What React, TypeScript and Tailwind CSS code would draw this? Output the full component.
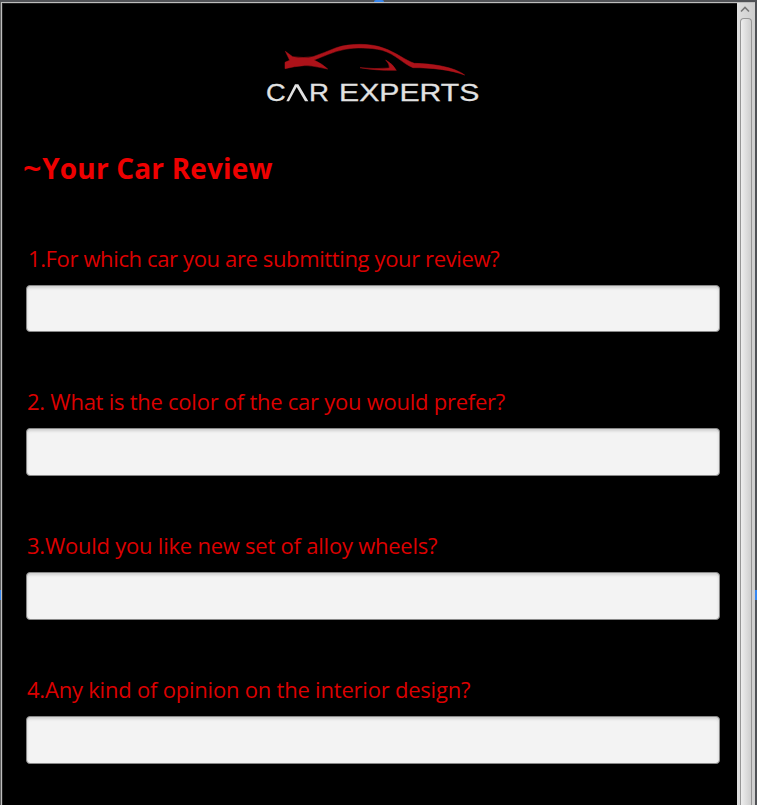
const questions = [
  { text: '1.For which car you are submitting your review?', style: 'ml-[28px] tracking-[-0.37px]', top: 'h-[143px]', box: 'h-[47px]' },
  { text: '2. What is the color of the car you would prefer?', style: 'ml-[27px] tracking-[-0.25px]', top: 'h-[144px]', box: 'h-[48px]' },
  { text: '3.Would you like new set of alloy wheels?', style: 'ml-[27px] tracking-[-0.23px]', top: 'h-[144px]', box: 'h-[48px]' },
  { text: '4.Any kind of opinion on the interior design?', style: 'ml-[27px] tracking-[-0.21px]', top: 'h-[144px]', box: 'h-[48px]' },
];

function Logo() {
  return (
    <svg className="ml-[252px] block h-[75px] w-[240px] shrink-0" viewBox="0 0 720 225" role="img" aria-label="Car Experts">
      <g fill="#ac1219" stroke="#ac1219" strokeWidth="1.5">
        <path d="M91 49 L113 65 Q147 70 174 65 Q208 53 244 38 C288 24 348 25 385 39 C425 53 451 76 478 85 C533 86 598 96 629 120 C586 104 530 98 474 98 C446 88 421 57 382 46 C346 37 303 37 270 43 C235 49 203 66 177 75 Q203 87 218 102 C187 96 165 91 146 92 Q118 94 90 101 L90 82 L104 76 Z" />
        <path d="M315 98 Q360 103 403 99 Q404 87 392 75 Q414 87 424 106 Q363 107 315 98Z" />
      </g>
      <g fill="#e2e2e2" stroke="#e2e2e2" strokeWidth="0.8" fontFamily="Liberation Sans, Arial, sans-serif" fontSize="71">
        <text x="33" y="198" textLength="59" lengthAdjust="spacingAndGlyphs">C</text>
        <text x="162" y="198" textLength="60" lengthAdjust="spacingAndGlyphs">R</text>
        <text x="252" y="198" textLength="421" lengthAdjust="spacingAndGlyphs">EXPERTS</text>
      </g>
      <path d="M94 199 L120 148 L130 148 L160 199 L150 199 L125 156 L102 199 Z" fill="#e2e2e2" />
    </svg>
  );
}

function Scrollbar() {
  return (
    <div className="flex w-[18px] shrink-0 flex-col items-center bg-linear-to-r from-[#dedede] to-[#cecece]">
      <svg className="h-[15px] w-[14px] shrink-0" viewBox="0 0 14 15" fill="none" stroke="#777" strokeWidth="1.6">
        <path d="M2 8.5 L6 4.5 L10 8.5" />
      </svg>
      <div className="w-[12px] flex-1 rounded-t-[4px] border border-b-0 border-[#969696] bg-linear-to-r from-[#eeeeee] to-[#cecece]" />
    </div>
  );
}

export default function App() {
  return (
    <div className="flex h-[805px] w-[757px] flex-col overflow-hidden bg-[#505256] font-['Open_Sans','Noto_Sans',sans-serif]">
      <div className="flex h-[2px] shrink-0 justify-center">
        <div className="w-[10px] rounded-t-full bg-[#3686ef]" />
      </div>
      <div className="flex min-h-0 flex-1">
        <div className="flex w-px shrink-0 flex-col bg-[#606060]">
          <div className="mt-[588px] h-[10px] bg-[#3686ef]" />
        </div>
        <div className="flex min-w-0 flex-1 border-t border-l border-[#bdbdbd]">
          <main className="flex min-w-0 flex-1 flex-col overflow-hidden border-t border-l border-[#202020] bg-black pt-[31px]">
            <Logo />
            <h1 className="mt-[38px] ml-[20px] h-[40px] shrink-0 text-[28px] leading-[40px] font-bold tracking-[0.17px] whitespace-nowrap text-[#ee0000]"><span className="mr-[3px] inline-block origin-left scale-x-115">~</span>Your Car Review</h1>
            <form className="mt-[54px] flex flex-col">
              {questions.map((q) => (
                <div key={q.text} className={`-ml-[3px] flex shrink-0 flex-col ${q.top}`}>
                  <label className={`h-[43px] shrink-0 text-[22px] leading-[32px] whitespace-nowrap text-[#dc0000] ${q.style}`}>{q.text}</label>
                  <input aria-label={q.text} className={`ml-[26px] w-[694px] shrink-0 rounded-[4px] border border-[#888] bg-[#f3f3f3] px-3 shadow-[inset_0_2px_3px_#d0d0d0] outline-none ${q.box}`} />
                </div>
              ))}
            </form>
          </main>
          <Scrollbar />
        </div>
        <div className="flex w-[2px] shrink-0 flex-col bg-[#505256]">
          <div className="mt-[588px] h-[10px] bg-[#3686ef]" />
        </div>
      </div>
    </div>
  );
}
